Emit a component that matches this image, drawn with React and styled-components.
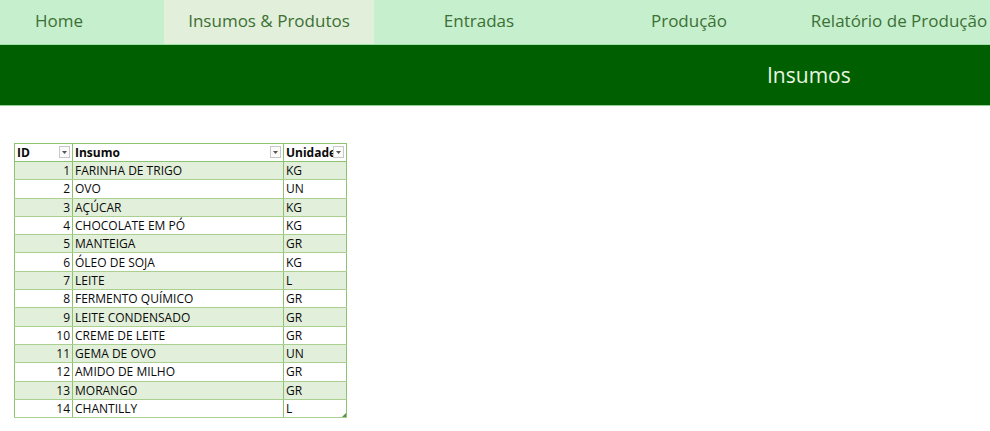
import React from 'react';
import styled, { createGlobalStyle } from 'styled-components';

const GlobalStyle = createGlobalStyle`
    html, body {
        margin: 0;
        padding: 0;
        background: #ffffff;
        font-family: "Open Sans", "Liberation Sans", sans-serif;
    }
`;

const Page = styled.div`
    width: 990px;
    height: 431px;
    overflow: hidden;
    background: #ffffff;
`;

const NavBar = styled.nav`
    height: 44px;
    background: #c6efce;
    overflow: hidden;
    border-bottom: 1px solid #9fe0a8;
`;

const NavRow = styled.div`
    display: flex;
    margin-left: -46px;
    height: 100%;
`;

const NavTab = styled.div`
    flex: 0 0 210px;
    display: flex;
    align-items: center;
    justify-content: center;
    background: ${(p) => (p.$active ? '#e2efda' : 'transparent')};
    color: #3c6f34;
    font-size: 17px;
    padding-bottom: 4px;
    white-space: nowrap;
`;

const TitleBand = styled.header`
    height: 60px;
    background: #005f00;
    border-bottom: 1px solid #8fcf8f;
    display: flex;
    align-items: center;
    padding-left: 767px;
`;

const Title = styled.h1`
    margin: 0;
    font-weight: 400;
    font-size: 21px;
    color: #e8f5e0;
`;

const TableWrap = styled.div`
    padding: 37px 0 0 14px;
`;

const Table = styled.table`
    border-collapse: collapse;
    table-layout: fixed;
    font-size: 12px;
    color: #0a0a0a;
    border: 1px solid #8dc26f;
`;

const HeadCell = styled.th`
    position: relative;
    height: 17px;
    padding: 0 0 0 2px;
    text-align: left;
    font-weight: 700;
    background: #ffffff;
    border: 1px solid #8dc26f;
    overflow: hidden;
    white-space: nowrap;
`;

const Row = styled.tr`
    background: ${(p) => (p.$shade ? '#e2efda' : '#ffffff')};
`;

const Cell = styled.td`
    height: 17.3px;
    padding: 0 2px;
    text-align: ${(p) => (p.$right ? 'right' : 'left')};
    border-left: 1px solid #8dc26f;
    border-right: 1px solid #8dc26f;
    border-bottom: 1px solid #a9d08e;
    white-space: nowrap;
    position: relative;
`;

const FilterButton = styled.span`
    position: absolute;
    right: 2px;
    top: 2px;
    width: 11px;
    height: 12px;
    box-sizing: border-box;
    background: #fbfbfb;
    border: 1px solid #c8c8c8;
    display: flex;
    align-items: center;
    justify-content: center;
`;

const ResizeMark = styled.span`
    position: absolute;
    right: 0;
    bottom: 0;
    width: 0;
    height: 0;
    border-left: 4px solid transparent;
    border-bottom: 4px solid #5b8f4a;
`;

const Arrow = () => (
    <svg width="5" height="3" viewBox="0 0 5 3">
        <path d="M0 0 L5 0 L2.5 3 Z" fill="#555" />
    </svg>
);

const tabs = ['Home', 'Insumos & Produtos', 'Entradas', 'Produção', 'Relatório de Produção'];

const insumos = [
    { id: 1, nome: 'FARINHA DE TRIGO', un: 'KG' },
    { id: 2, nome: 'OVO', un: 'UN' },
    { id: 3, nome: 'AÇÚCAR', un: 'KG' },
    { id: 4, nome: 'CHOCOLATE EM PÓ', un: 'KG' },
    { id: 5, nome: 'MANTEIGA', un: 'GR' },
    { id: 6, nome: 'ÓLEO DE SOJA', un: 'KG' },
    { id: 7, nome: 'LEITE', un: 'L' },
    { id: 8, nome: 'FERMENTO QUÍMICO', un: 'GR' },
    { id: 9, nome: 'LEITE CONDENSADO', un: 'GR' },
    { id: 10, nome: 'CREME DE LEITE', un: 'GR' },
    { id: 11, nome: 'GEMA DE OVO', un: 'UN' },
    { id: 12, nome: 'AMIDO DE MILHO', un: 'GR' },
    { id: 13, nome: 'MORANGO', un: 'GR' },
    { id: 14, nome: 'CHANTILLY', un: 'L' }
];

const App = () => {
    return (
        <>
            <GlobalStyle />
            <Page>
                <NavBar>
                    <NavRow>
                        {tabs.map((tab) => (
                            <NavTab key={tab} $active={tab === 'Insumos & Produtos'}>{tab}</NavTab>
                        ))}
                    </NavRow>
                </NavBar>
                <TitleBand>
                    <Title>Insumos</Title>
                </TitleBand>
                <TableWrap>
                    <Table>
                        <colgroup>
                            <col style={{ width: 58 }} />
                            <col style={{ width: 211 }} />
                            <col style={{ width: 63 }} />
                        </colgroup>
                        <thead>
                            <tr>
                                <HeadCell>ID<FilterButton><Arrow /></FilterButton></HeadCell>
                                <HeadCell>Insumo<FilterButton><Arrow /></FilterButton></HeadCell>
                                <HeadCell>Unidade<FilterButton><Arrow /></FilterButton></HeadCell>
                            </tr>
                        </thead>
                        <tbody>
                            {insumos.map((item, i) => (
                                <Row key={item.id} $shade={i % 2 === 0}>
                                    <Cell $right>{item.id}</Cell>
                                    <Cell>{item.nome}</Cell>
                                    <Cell>
                                        {item.un}
                                        {i === insumos.length - 1 && <ResizeMark />}
                                    </Cell>
                                </Row>
                            ))}
                        </tbody>
                    </Table>
                </TableWrap>
            </Page>
        </>
    );
};

export default App;
